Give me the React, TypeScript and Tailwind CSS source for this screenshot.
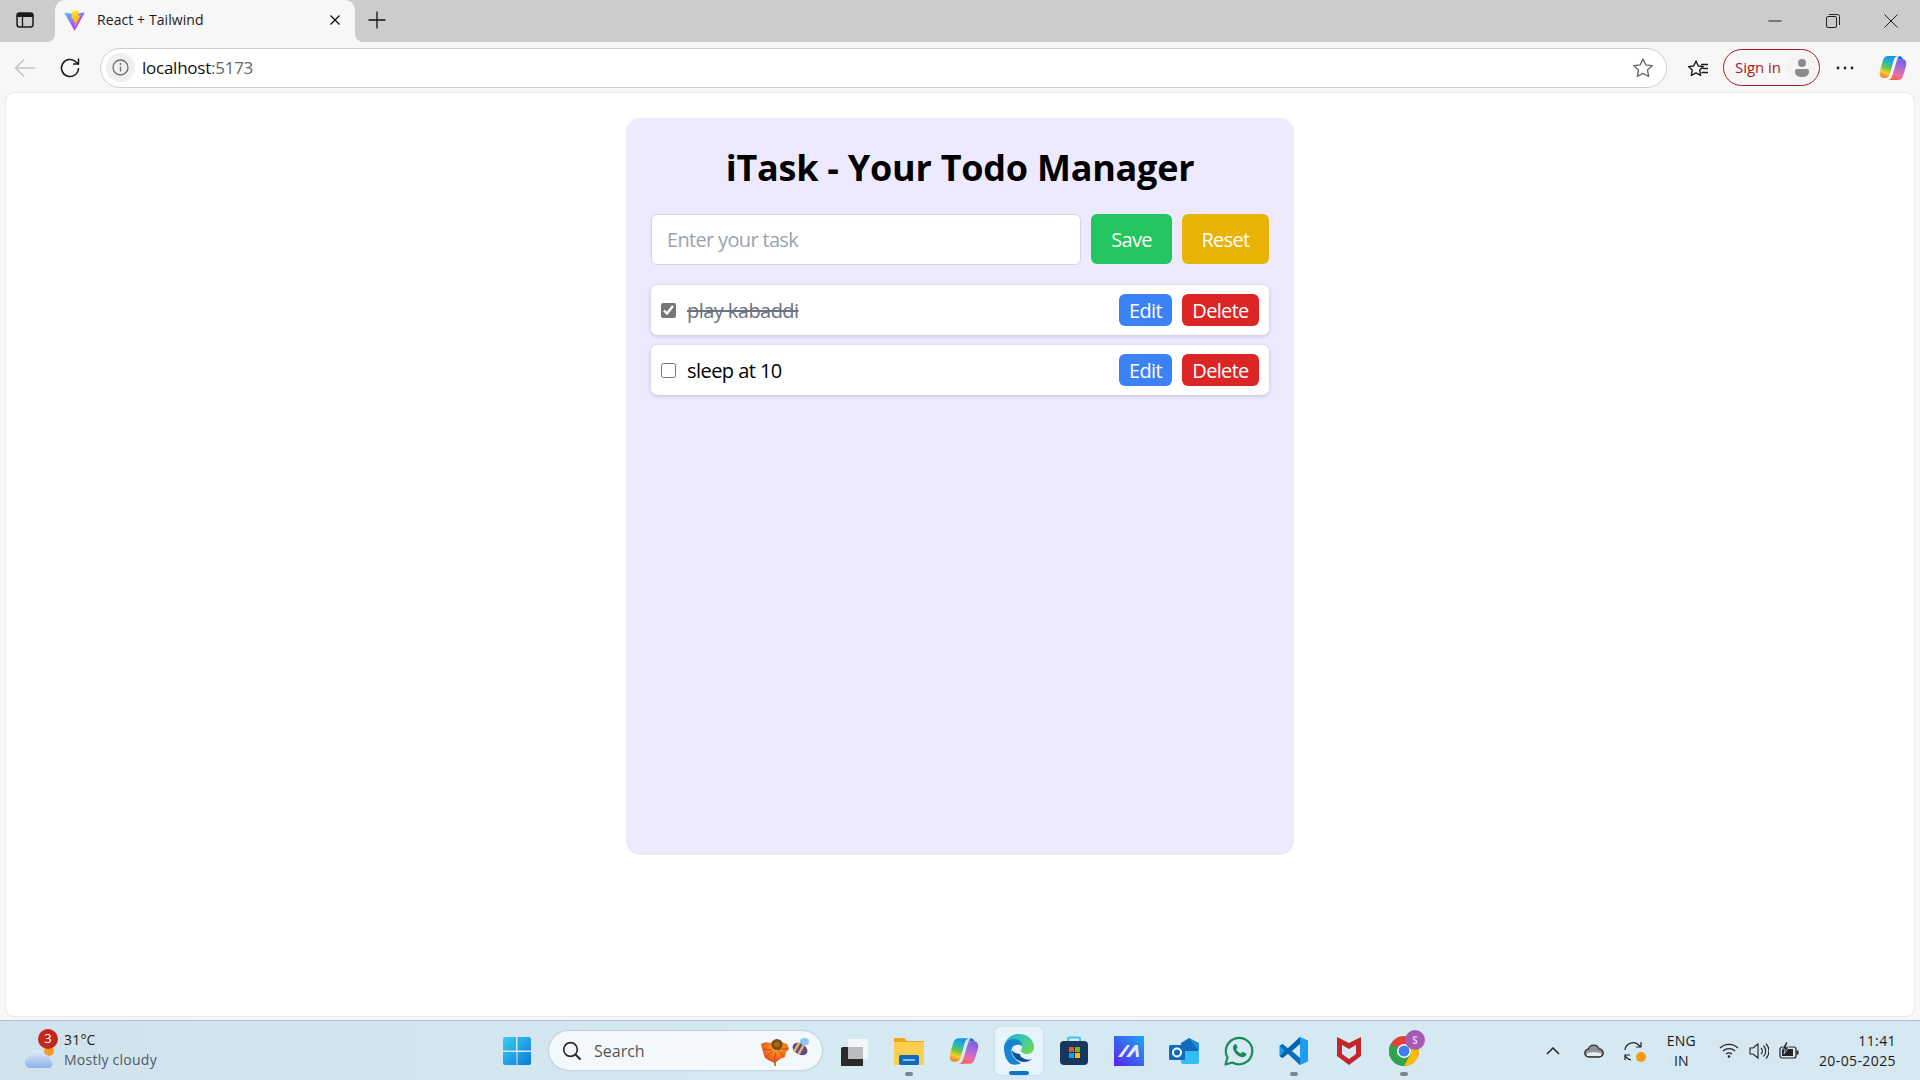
import React from "react";

const UI = "font-['Open_Sans','Noto_Sans',sans-serif]";

function Vite() {
  return (
    <svg width="21" height="21" viewBox="0 0 410 404">
      <defs>
        <linearGradient id="va" x1="6" y1="33" x2="235" y2="344" gradientUnits="userSpaceOnUse">
          <stop stopColor="#41D1FF" />
          <stop offset="1" stopColor="#BD34FE" />
        </linearGradient>
        <linearGradient id="vb" x1="194" y1="8" x2="236" y2="292" gradientUnits="userSpaceOnUse">
          <stop stopColor="#FFEA83" />
          <stop offset="0.08" stopColor="#FFDD35" />
          <stop offset="1" stopColor="#FFA800" />
        </linearGradient>
      </defs>
      <path d="M399.641 59.525L215.643 388.545C211.844 395.338 202.084 395.378 198.228 388.618L10.582 59.556C6.381 52.19 12.68 43.267 21.028 44.759L205.223 77.682C206.398 77.892 207.601 77.89 208.776 77.676L389.119 44.806C397.439 43.289 403.768 52.143 399.641 59.525Z" fill="url(#va)" />
      <path d="M292.965 1.574L156.801 28.255C154.563 28.694 152.906 30.59 152.771 32.866L144.395 174.33C144.198 177.662 147.258 180.248 150.51 179.498L188.42 170.749C191.967 169.931 195.172 173.055 194.443 176.622L183.18 231.775C182.422 235.487 185.907 238.661 189.532 237.56L212.947 230.446C216.577 229.344 220.065 232.527 219.297 236.242L201.398 322.875C200.278 328.294 207.486 331.249 210.492 326.603L212.5 323.5L323.454 102.072C325.312 98.365 322.108 94.137 318.036 94.923L279.014 102.454C275.347 103.161 272.227 99.746 273.262 96.158L298.731 7.867C299.767 4.273 296.636 0.855 292.965 1.574Z" fill="url(#vb)" />
    </svg>
  );
}

function Copilot({ size = 28, id }: { size?: number; id: string }) {
  return (
    <svg width={size} height={size} viewBox="0 0 28 28">
      <defs>
        <linearGradient id={`${id}a`} x1="0.6" y1="0" x2="0.3" y2="1">
          <stop offset="0" stopColor="#1d8fe8" />
          <stop offset="0.3" stopColor="#22b5c8" />
          <stop offset="0.55" stopColor="#6cc644" />
          <stop offset="0.78" stopColor="#f6cd2e" />
          <stop offset="1" stopColor="#f4783a" />
        </linearGradient>
        <linearGradient id={`${id}b`} x1="0.7" y1="0" x2="0.3" y2="1">
          <stop offset="0" stopColor="#7a5fe0" />
          <stop offset="0.4" stopColor="#b06ad8" />
          <stop offset="0.75" stopColor="#f06e9e" />
          <stop offset="1" stopColor="#f0603c" />
        </linearGradient>
      </defs>
      <path d="M9 2h11c-3 0-4.500 1.500-5.200 4L10.500 21c-.6 2-2 3-4.500 3H5c-3.500 0-5-3-4-7L4 6c.8-2.500 2.500-4 5-4z" fill={`url(#${id}a)`} />
      <path d="M20 2c2.500 0 4 1.500 4 4.500-1-1.200-2-1.500-3.500-1.500-1.700 0-3 1-3.500 2.500" fill="#1d6fe0" />
      <path d="M19 26H8c3 0 4.500-1.500 5.200-4L17.500 7.500C18 6 19 5 21 5h2c3.500 0 5 3 4 7l-3 10c-.8 2.500-2.500 4-5 4z" fill={`url(#${id}b)`} />
    </svg>
  );
}

function TitleBar() {
  return (
    <div className={`flex h-[42px] shrink-0 items-center bg-[#cccccc] ${UI}`}>
      <svg width="18" height="18" viewBox="0 0 18 18" className="-mt-[2px] ml-[16px]">
        <rect x="1" y="2" width="16" height="14" rx="2.500" fill="none" stroke="#1a1a1a" strokeWidth="1.500" />
        <path d="M1 6h16V4.500A2.500 2.500 0 0 0 14.500 2h-11A2.500 2.500 0 0 0 1 4.500z" fill="#1a1a1a" />
        <path d="M6.500 6v10" stroke="#1a1a1a" strokeWidth="1.300" />
      </svg>
      <div className="relative ml-[21px] flex h-full w-[300px] items-center rounded-t-[10px] bg-[#f7f7f7] pb-[2px] pl-[9px]">
        <span className="absolute -left-2 bottom-0 h-2 w-2 bg-[#f7f7f7]"><span className="block h-2 w-2 rounded-br-lg bg-[#cccccc]" /></span>
        <span className="absolute -right-2 bottom-0 h-2 w-2 bg-[#f7f7f7]"><span className="block h-2 w-2 rounded-bl-lg bg-[#cccccc]" /></span>
        <Vite />
        <span className="ml-[12px] text-[14px] leading-none tracking-[0.08px] text-[#1b1b1b]">React + Tailwind</span>
        <svg width="12" height="12" viewBox="0 0 12 12" className="ml-auto mr-[14px]">
          <path d="M1.500 1.500l9 9M10.500 1.500l-9 9" stroke="#111" strokeWidth="1.300" />
        </svg>
      </div>
      <svg width="18" height="18" viewBox="0 0 18 18" className="-mt-[2px] ml-[13px]">
        <path d="M9 0.500v17M0.500 9h17" stroke="#111" strokeWidth="1.300" />
      </svg>
      <div className="ml-auto flex items-center">
        <svg width="14" height="14" viewBox="0 0 14 14"><path d="M0.500 7h13" stroke="#222" strokeWidth="1" /></svg>
        <svg width="14" height="14" viewBox="0 0 14 14" className="ml-[44px]">
          <rect x="0.500" y="2.500" width="10" height="11" rx="1.500" fill="none" stroke="#222" />
          <path d="M3 .5h8.500A2 2 0 0 1 13.500 2.500V11" fill="none" stroke="#222" />
        </svg>
        <svg width="14" height="14" viewBox="0 0 14 14" className="ml-[44px] mr-[22px]">
          <path d="M.5.5l13 13M13.500.5l-13 13" stroke="#222" strokeWidth="1" />
        </svg>
      </div>
    </div>
  );
}

function Toolbar() {
  return (
    <div className={`flex h-[51px] shrink-0 items-center bg-[#f7f7f7] ${UI}`}>
      <svg width="22" height="20" viewBox="0 0 22 20" className="ml-[14px]">
        <path d="M21 10H1.500M10 1.500L1.500 10 10 18.500" fill="none" stroke="#c4c4c4" strokeWidth="1.400" />
      </svg>
      <svg width="22" height="22" viewBox="0 0 22 22" className="ml-[23px]">
        <path d="M19.500 11a8.500 8.500 0 1 1-2.600-6.100L19.500 7" fill="none" stroke="#1a1a1a" strokeWidth="1.500" />
        <path d="M19.500 1.500V7H14" fill="none" stroke="#1a1a1a" strokeWidth="1.500" />
      </svg>
      <div className="ml-[19px] flex h-[40px] w-[1567px] items-center rounded-full border border-[#cfcfcf] bg-white pl-[5px]">
        <div className="flex h-[29px] w-[29px] items-center justify-center rounded-full bg-[#f0f0f0]">
          <svg width="17" height="17" viewBox="0 0 17 17">
            <circle cx="8.500" cy="8.500" r="7.500" fill="none" stroke="#6e6e6e" strokeWidth="1.300" />
            <path d="M8.500 7.500v5" stroke="#6e6e6e" strokeWidth="1.400" />
            <circle cx="8.500" cy="5" r="1" fill="#6e6e6e" />
          </svg>
        </div>
        <span className="ml-[7px] text-[17px] leading-none tracking-[-0.25px] text-[#111]">localhost<span className="text-[#666]">:5173</span></span>
        <svg width="22" height="22" viewBox="0 0 22 22" className="ml-auto mr-[12px]">
          <path d="M11 2l2.800 5.900 6.400.8-4.700 4.400 1.200 6.400L11 16.400l-5.700 3.100 1.200-6.400L1.800 8.700l6.400-.8z" fill="none" stroke="#6b6b6b" strokeWidth="1.400" strokeLinejoin="round" />
        </svg>
      </div>
      <svg width="22" height="22" viewBox="0 0 22 22" className="ml-[20px]">
        <path d="M9 2l2.300 5 5 .6-3.600 3.500 1 5.200L9 13.800l-4.700 2.700 1-5.400L1.500 7.600l5.200-.6z" fill="none" stroke="#1a1a1a" strokeWidth="1.400" strokeLinejoin="round" transform="translate(0 2)" />
        <path d="M14 7.500h7M15.500 11.500h5.500M14.500 15.500h6.500" stroke="#1a1a1a" strokeWidth="1.300" />
      </svg>
      <div className="ml-[14px] flex h-[37px] w-[97px] items-center rounded-full border-[1.5px] border-[#a81c20] pl-[11px]">
        <span className="text-[15px] leading-none tracking-[-0.05px] text-[#a81c20]">Sign in</span>
        <div className="ml-auto mr-[2px] flex h-[31px] w-[31px] items-center justify-center rounded-full bg-[#f4f4f4]">
          <svg width="16" height="20" viewBox="0 0 16 20">
            <circle cx="8" cy="5" r="4" fill="#8b8b8b" />
            <path d="M1 13a2 2 0 0 1 2-2h10a2 2 0 0 1 2 2v1c0 3-3 5-7 5s-7-2-7-5z" fill="#8b8b8b" />
          </svg>
        </div>
      </div>
      <svg width="18" height="4" viewBox="0 0 18 4" className="ml-[16px]">
        <circle cx="2" cy="2" r="1.400" fill="#222" />
        <circle cx="9" cy="2" r="1.400" fill="#222" />
        <circle cx="16" cy="2" r="1.400" fill="#222" />
      </svg>
      <div className="ml-[25px]"><Copilot id="cp1" /></div>
    </div>
  );
}

function TodoRow({ label, done }: { label: string; done?: boolean }) {
  return (
    <div className="flex h-[50px] items-center justify-between rounded-md bg-white pl-[10px] pr-[10px] shadow-[0_1px_4px_rgba(0,0,0,0.18)]">
      <div className="flex items-center">
        <input type="checkbox" defaultChecked={done} className="h-[15px] w-[15px] accent-[#767676]" />
        <span className={`ml-[11px] pt-[1px] text-[20px] tracking-[-0.55px] ${done ? "text-[#6b7280] line-through" : "text-black"}`}>{label}</span>
      </div>
      <div className="flex gap-[10px]">
        <button className="h-[32px] w-[53px] rounded-md bg-[#3b82f6] pt-[1px] text-[20px] leading-none tracking-[-0.67px] text-white">Edit</button>
        <button className="h-[32px] w-[77px] rounded-md bg-[#dc2626] pt-[1px] text-[20px] leading-none tracking-[-0.67px] text-white">Delete</button>
      </div>
    </div>
  );
}

function Card() {
  return (
    <div className="mx-auto flex h-[737px] w-[668px] flex-col rounded-[14px] bg-[#ede9fe] px-[25px] pt-[30px]">
      <h1 className="text-center text-[36px] font-bold leading-[40px] tracking-[-0.25px] text-black">iTask - Your Todo Manager</h1>
      <div className="mt-[26px] flex gap-[10px]">
        <input
          placeholder="Enter your task"
          className="h-[51px] w-[430px] rounded-md border border-[#d1d5db] bg-white px-[15px] text-[20px] tracking-[-0.67px] placeholder:text-[#9ca3af]"
        />
        <button className="h-[50px] w-[81px] rounded-md bg-[#22c55e] pt-[2px] text-[20px] leading-none tracking-[-0.67px] text-white">Save</button>
        <button className="h-[50px] w-[87px] rounded-md bg-[#eab308] pt-[2px] text-[20px] leading-none tracking-[-0.67px] text-white">Reset</button>
      </div>
      <div className="mt-[20px] flex flex-col gap-[10px]">
        <TodoRow label="play kabaddi" done />
        <TodoRow label="sleep at 10" />
      </div>
    </div>
  );
}

function Weather() {
  return (
    <div className="flex items-center pl-[24px]">
      <div className="relative h-[40px] w-[40px]">
        <svg width="32" height="24" viewBox="0 0 32 24" className="absolute left-0 top-[14px]">
          <defs>
            <linearGradient id="cl" x1="0" y1="0" x2="0" y2="1">
              <stop offset="0" stopColor="#e4eefc" />
              <stop offset="1" stopColor="#8eb1e8" />
            </linearGradient>
          </defs>
          <circle cx="25" cy="6" r="5" fill="#f59a23" />
          <path d="M6 23a5.500 5.500 0 0 1-1-10.800A8 8 0 0 1 20 9a6 6 0 0 1 6 6 4.500 4.500 0 0 1 0 8z" fill="url(#cl)" />
        </svg>
        <span className="absolute left-[14px] -top-[2px] flex h-[20px] w-[20px] items-center justify-center rounded-full bg-[#c4281c] text-[13px] leading-none text-white">3</span>
      </div>
      <div className="-mt-[2px] flex flex-col">
        <span className="text-[14px] leading-[20px] tracking-[0.2px] text-[#1a1a1a]">31°C</span>
        <span className="text-[14px] leading-[20px] tracking-[0.25px] text-[#4f5860]">Mostly cloudy</span>
      </div>
    </div>
  );
}

function IconSlot({ children, dot, active }: { children: React.ReactNode; dot?: boolean; active?: boolean }) {
  return (
    <div className={`relative flex h-[48px] w-[48px] shrink-0 items-center justify-center rounded-md ${active ? "bg-[#e8f4fb] shadow-[0_0_2px_rgba(0,0,0,0.15)]" : ""}`}>
      {children}
      {dot && <span className="absolute bottom-[-1px] h-[4px] w-[8px] rounded-full bg-[#7c868d]" />}
      {active && <span className="absolute bottom-[0px] h-[4px] w-[20px] rounded-full bg-[#0a74c9]" />}
    </div>
  );
}

function Search() {
  return (
    <div className="ml-[17px] flex h-[39px] w-[273px] shrink-0 items-center rounded-full bg-[#f2f8fc] pl-[13px] shadow-[0_0_2px_rgba(0,0,0,0.3)]">
      <svg width="20" height="20" viewBox="0 0 20 20">
        <circle cx="8.500" cy="8.500" r="6.800" fill="none" stroke="#2a2a2a" strokeWidth="1.700" />
        <path d="M13.500 13.500l5 5" stroke="#2a2a2a" strokeWidth="1.900" />
      </svg>
      <span className="ml-[12px] text-[16px] leading-none tracking-[0px] text-[#555]">Search</span>
      <svg width="50" height="30" viewBox="0 0 50 30" className="ml-auto mr-[12px]">
        <defs>
          <radialGradient id="fl" cx="0.55" cy="0.35" r="0.7">
            <stop offset="0" stopColor="#f6b12a" />
            <stop offset="0.55" stopColor="#f0701f" />
            <stop offset="1" stopColor="#e2451c" />
          </radialGradient>
        </defs>
        <path d="M15 24v6" stroke="#7ba33a" strokeWidth="2" />
        <path d="M1 8c4-2 6-2 9-1l5-3 6 2 6 2 2 5-3 3-1 5-5 2-5 4-5-2-5-3-2-6z" fill="url(#fl)" />
        <path d="M3 13l9 1M6 21l7-6M14 25l2-9M24 21l-6-7M28 13l-10 0" stroke="#c93a14" strokeWidth="0.800" />
        <circle cx="17" cy="8.500" r="5.500" fill="#7a4a12" />
        <circle cx="17" cy="8.500" r="3" fill="#a8651c" />
        <g transform="rotate(30 40 13)">
          <ellipse cx="40" cy="13" rx="8" ry="5.500" fill="#5d4694" />
          <rect x="35" y="8" width="2.500" height="10" fill="#e8b45a" />
          <rect x="40" y="7.500" width="2.500" height="11" fill="#e8b45a" />
        </g>
        <ellipse cx="44.500" cy="5.500" rx="4.500" ry="3.500" fill="#8cc6f0" />
      </svg>
    </div>
  );
}

function Taskbar() {
  return (
    <div className={`relative flex h-[60px] shrink-0 items-center border-t border-[#b4bfc7] bg-gradient-to-r from-[#d0e3ed] via-[#d6eaf3] to-[#d5e8f2] ${UI}`}>
      <div className="w-[502px] shrink-0"><Weather /></div>
      <div className="flex items-center">
        <svg width="30" height="30" viewBox="0 0 30 30" className="shrink-0">
          <defs>
            <linearGradient id="w1" x1="0" y1="0" x2="1" y2="1">
              <stop offset="0" stopColor="#3ccbf6" />
              <stop offset="1" stopColor="#0a7bd4" />
            </linearGradient>
          </defs>
          <path d="M1 3a2 2 0 0 1 2-2h11v13.500H1zM15.500 1H27a2 2 0 0 1 2 2v11.500H15.500zM1 16h13.500v13H3a2 2 0 0 1-2-2zM15.500 16H29v11a2 2 0 0 1-2 2H15.500z" fill="url(#w1)" />
        </svg>
        <Search />
        <div className="ml-[8px] flex w-[600px] items-center gap-[7px]">
          <IconSlot>
            <svg width="30" height="30" viewBox="0 0 30 30" className="-ml-[2px]">
              <rect x="10" y="3" width="20" height="20" rx="1.500" fill="#f6f8f9" fillOpacity="0.9" />
              <rect x="3" y="11" width="22" height="20" rx="2" fill="#2a2a2a" />
              <rect x="10" y="11" width="15" height="12" fill="#b9bdbf" />
            </svg>
          </IconSlot>
          <IconSlot dot>
            <svg width="32" height="30" viewBox="0 0 32 30">
              <path d="M1 2h10l3 3h17v24H1z" fill="#e6aa1c" />
              <rect x="1" y="6" width="30" height="23" fill="#fdcf4e" />
              <rect x="6" y="19" width="20" height="10" rx="1.500" fill="#0f6cbd" />
              <rect x="10" y="23" width="12" height="2" fill="#7fc0ee" />
            </svg>
          </IconSlot>
          <IconSlot><Copilot size={30} id="cp2" /></IconSlot>
          <IconSlot active>
            <svg width="32" height="32" viewBox="0 0 32 32" className="-mt-[3px]">
              <defs>
                <linearGradient id="e1" x1="0" y1="0" x2="1" y2="0.8">
                  <stop offset="0" stopColor="#2aa6d8" />
                  <stop offset="0.5" stopColor="#3cc8b0" />
                  <stop offset="1" stopColor="#74d64f" />
                </linearGradient>
              </defs>
              <path d="M1 15C2 6 8 1 16 1c9 0 15 6 15 13 0 5-3 7-7 7-4 0-6-2-6-4 0-1 1-1 1-3 0-3-3-6-8-6-5 0-9 3-10 7z" fill="url(#e1)" />
              <path d="M1 15c0-6 5-9 10-9 5 0 8 3 8 7-3-2-8-2-10 2-2 5 2 12 9 15-3 2-7 2-10 1C3 28 1 21 1 15z" fill="#1684d0" />
              <path d="M9 17c0 7 6 12 12 12 3 0 6-1 8-3-3 1-6 1-9-1-2-1-3-2-3-4-4 0-7-2-8-4z" fill="#0c4f96" />
            </svg>
          </IconSlot>
          <IconSlot>
            <svg width="30" height="32" viewBox="0 0 30 32">
              <path d="M9 7V4a1.500 1.500 0 0 1 1.500-1.500h9A1.500 1.500 0 0 1 21 4v3" fill="none" stroke="#3cc5ef" strokeWidth="2" />
              <rect x="1" y="6" width="28" height="24" rx="4" fill="#17375e" />
              <rect x="10" y="12" width="5" height="5" fill="#f25022" />
              <rect x="16" y="12" width="5" height="5" fill="#7fba00" />
              <rect x="10" y="18" width="5" height="5" fill="#00a4ef" />
              <rect x="16" y="18" width="5" height="5" fill="#ffb900" />
            </svg>
          </IconSlot>
          <IconSlot>
            <svg width="30" height="30" viewBox="0 0 30 30">
              <defs>
                <linearGradient id="m1" x1="0" y1="1" x2="1" y2="0">
                  <stop offset="0" stopColor="#5a22e6" />
                  <stop offset="1" stopColor="#18a8f5" />
                </linearGradient>
              </defs>
              <rect width="30" height="30" fill="url(#m1)" />
              <path d="M4 21L13 9h3L8 21zM12 21L21 9h3l1 12h-3l-.5-7L16 21z" fill="#e8e6fb" />
            </svg>
          </IconSlot>
          <IconSlot>
            <svg width="30" height="28" viewBox="0 0 30 28">
              <path d="M12 6l8-5 9 5v8H12z" fill="#0f6cbd" />
              <path d="M12 14h18v11a2 2 0 0 1-2 2H14a2 2 0 0 1-2-2z" fill="#33bdf2" />
              <path d="M20 1l10 5v8z" fill="#1d8fdc" />
              <rect x="0" y="8" width="16" height="15" rx="1.500" fill="#0f6cbd" />
              <circle cx="8" cy="15.500" r="4" fill="none" stroke="#fff" strokeWidth="2" />
            </svg>
          </IconSlot>
          <IconSlot>
            <svg width="30" height="30" viewBox="0 0 30 30">
              <path d="M1.500 28.500l2-7A13.200 13.200 0 1 1 8.400 26.500z" fill="none" stroke="#1a8a5a" strokeWidth="2.200" strokeLinejoin="round" />
              <path d="M10.500 8.500c-1.500 1-2 3-1 5.500 1.500 3.500 4 6 7.500 7 2 .5 4 0 5-1.500.5-1 .5-1.500.2-2L19 16c-.5-.2-1 0-1.300.5l-1 1c-2-.8-3.500-2.300-4.500-4.300l1-1.200c.3-.4.3-.8.2-1.200l-1.200-2.500c-.4-.5-1.200-.3-1.700.2z" fill="#1a8a5a" />
            </svg>
          </IconSlot>
          <IconSlot dot>
            <svg width="30" height="30" viewBox="0 0 30 30">
              <path d="M21 1l8 3.500v21L21 29 9 17.500 3.500 22 .5 20V10l3-2L9 12.500z" fill="#1f9cf0" />
              <path d="M21 8l-8 7 8 7z" fill="#d6e9f3" />
              <path d="M3.500 8L21 22v7L.5 10z" fill="#0f6cbd" />
              <path d="M21 1v7L3.500 22l-3-2z" fill="#0065a9" />
            </svg>
          </IconSlot>
          <IconSlot>
            <svg width="28" height="30" viewBox="0 0 28 30">
              <path d="M2 1l12 6 12-6v19L14 29 2 20zM7 9v9l7 5 7-5V9l-7 4z" fill="#c0282c" fillRule="evenodd" />
            </svg>
          </IconSlot>
          <IconSlot dot>
            <div className="relative h-[30px] w-[30px]">
              <svg width="30" height="30" viewBox="0 0 30 30">
                <circle cx="15" cy="15" r="15" fill="#e34133" />
                <path d="M15 15L1.500 8A15 15 0 0 0 15 30l7.500-13z" fill="#2da44e" />
                <path d="M15 9h13.800A15 15 0 0 1 15 30l7-13z" fill="#fbbc04" />
                <circle cx="15" cy="15" r="7" fill="#fff" />
                <circle cx="15" cy="15" r="5.500" fill="#3f7fec" />
              </svg>
              <span className="absolute -right-[6px] -top-[6px] flex h-[20px] w-[20px] items-center justify-center rounded-full bg-[#a55bb5] text-[10px] font-bold leading-none text-[#e6c8ec]">S</span>
            </div>
          </IconSlot>
        </div>
      </div>
      <div className="ml-auto flex items-center pr-[24px]">
        <svg width="14" height="8" viewBox="0 0 14 8"><path d="M1 7l6-6 6 6" fill="none" stroke="#222" strokeWidth="1.500" /></svg>
        <svg width="20" height="14" viewBox="0 0 20 14" className="ml-[24px]">
          <path d="M5 13a4 4 0 0 1-.5-8A5.500 5.500 0 0 1 15 5a4 4 0 0 1 .5 8z" fill="#8f9497" stroke="#333" strokeWidth="1.300" />
          <path d="M3 9l7-1 7 1v3H3z" fill="#e8ecee" />
        </svg>
        <div className="relative ml-[19px] h-[22px] w-[22px]">
          <svg width="22" height="22" viewBox="0 0 22 22">
            <path d="M2 10a8 8 0 0 1 13-5.500L18 7M18 2v5h-5M2 20v-5h5M2 15a8 8 0 0 0 6 5" fill="none" stroke="#222" strokeWidth="1.200" />
          </svg>
          <span className="absolute bottom-[0px] right-[-1px] h-[10px] w-[10px] rounded-full bg-[#f89a0e]" />
        </div>
        <div className="ml-[22px] flex flex-col items-center text-[14px] leading-[20px] tracking-[0.2px] text-[#1a1a1a]">
          <span>ENG</span>
          <span>IN</span>
        </div>
        <svg width="20" height="15" viewBox="0 0 20 15" className="ml-[23px]">
          <path d="M1 5a13 13 0 0 1 18 0M4 8a9 9 0 0 1 12 0M7 11a5 5 0 0 1 6 0" fill="none" stroke="#222" strokeWidth="1.200" />
          <circle cx="10" cy="13.500" r="1.300" fill="#222" />
        </svg>
        <svg width="20" height="18" viewBox="0 0 20 18" className="ml-[10px]">
          <path d="M1 6h3l5-4v14l-5-4H1z" fill="none" stroke="#222" strokeWidth="1.100" />
          <path d="M12 6a4 4 0 0 1 0 6M14.500 3.500a8 8 0 0 1 0 11M17 1.500a11 11 0 0 1 0 15" fill="none" stroke="#222" strokeWidth="1.100" />
        </svg>
        <svg width="20" height="18" viewBox="0 0 20 18" className="ml-[10px]">
          <rect x="1" y="5" width="16" height="11" rx="2" fill="none" stroke="#222" strokeWidth="1.200" />
          <rect x="3" y="7" width="11" height="7" fill="#222" />
          <rect x="17.500" y="8.500" width="2" height="4" fill="#222" />
          <path d="M7 0L3 7h3l-1 5 5-7H7l2-5z" fill="#222" stroke="#d6eaf3" strokeWidth="0.700" />
        </svg>
        <div className="ml-[20px] flex flex-col items-end text-[14px] leading-[20px] tracking-[0.4px] text-[#1a1a1a]">
          <span>11:41</span>
          <span>20-05-2025</span>
        </div>
      </div>
    </div>
  );
}

export default function App() {
  return (
    <div className={`flex h-screen w-[1920px] flex-col overflow-hidden bg-[#f7f7f7] ${UI}`}>
      <TitleBar />
      <Toolbar />
      <div className="flex min-h-0 flex-1 flex-col px-[6px] pb-[4px]">
        <div className="flex-1 rounded-lg bg-white pt-[25px] shadow-[0_0_2px_rgba(0,0,0,0.2)]">
          <Card />
        </div>
      </div>
      <Taskbar />
    </div>
  );
}
